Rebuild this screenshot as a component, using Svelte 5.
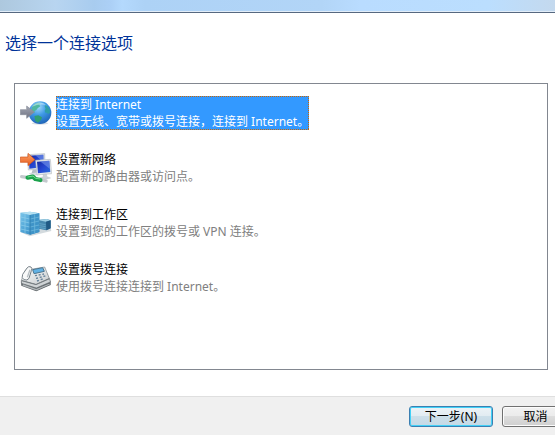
<script>
  let selected = $state('internet');

  const options = [
    { id: 'internet', title: '连接到 Internet', desc: '设置无线、宽带或拨号连接，连接到 Internet。' },
    { id: 'network', title: '设置新网络', desc: '配置新的路由器或访问点。' },
    { id: 'workplace', title: '连接到工作区', desc: '设置到您的工作区的拨号或 VPN 连接。' },
    { id: 'dialup', title: '设置拨号连接', desc: '使用拨号连接连接到 Internet。' }
  ];
</script>

<svelte:head><title>设置连接或网络</title></svelte:head>

<div class="wizard">
  <div class="glass"></div>

  <main class="content">
    <h1>选择一个连接选项</h1>

    <ul class="options">
      {#each options as opt (opt.id)}
        <li>
          <button type="button" class="option" class:selected={selected === opt.id}
                  aria-pressed={selected === opt.id} onclick={() => (selected = opt.id)}>
            <svg class="icon" viewBox="0 0 96 96" aria-hidden="true">
              {#if opt.id === 'internet'}
                <defs>
                  <radialGradient id="sea" cx="0.42" cy="0.25" r="0.8">
                    <stop offset="0" stop-color="#a4dafa" />
                    <stop offset="0.45" stop-color="#3f9ae6" />
                    <stop offset="1" stop-color="#1c5fb4" />
                  </radialGradient>
                  <linearGradient id="grey-arrow" x1="0" y1="0" x2="0" y2="1">
                    <stop offset="0" stop-color="#a5a8b4" />
                    <stop offset="1" stop-color="#6d7282" />
                  </linearGradient>
                </defs>
                <ellipse cx="60" cy="82" rx="25" ry="4" fill="#d5dce3" />
                <circle cx="60" cy="50" r="34" fill="url(#sea)" />
                <path d="M36 34 L43 25 L52 20 L62 21 L58 27 L61 31 L53 37 L49 42 L43 46 L45 52 L39 49 L34 44Z" fill="#4fb7a0" />
                <path d="M76 26 L82 30 L89 40 L90 50 L85 54 L80 50 L76 50 L74 44 L77 38 L74 32Z" fill="#2f9fa7" />
                <path d="M43 60 L55 58 L66 64 L63 72 L54 80 L46 75Z" fill="#2f9f74" />
                <path d="M36 32 Q58 9 81 29 Q63 20 36 32Z" fill="#def6ff" opacity="0.5" />
                <path d="M1 41 H20 V30 L43 48 L20 67 V56 H1Z" fill="url(#grey-arrow)" stroke="#8a8e9a" stroke-width="2" />
              {:else if opt.id === 'network'}
                <defs>
                  <linearGradient id="screen" x1="0" y1="0" x2="1" y2="1">
                    <stop offset="0" stop-color="#1428a0" />
                    <stop offset="0.5" stop-color="#2545d0" />
                    <stop offset="1" stop-color="#2a6cdc" />
                  </linearGradient>
                  <linearGradient id="orange-arrow" x1="0" y1="0" x2="0" y2="1">
                    <stop offset="0" stop-color="#ffa468" />
                    <stop offset="1" stop-color="#e65a1d" />
                  </linearGradient>
                </defs>
                <path d="M23 11 L74 8 L75 52 L25 57Z" fill="#dee2e5" stroke="#b5bcc4" stroke-width="2" />
                <path d="M27 14 L70 11 L71 48 L28 53Z" fill="url(#screen)" />
                <path d="M45 12 L70 11 L70 34Z" fill="#7897ea" opacity="0.6" />
                <path d="M38 56 L50 55 L52 66 L34 69Z" fill="#b3bcc6" />
                <path d="M28 68 L56 62 L68 68 L40 74Z" fill="#dae0e5" stroke="#b3bbc2" />
                <path d="M47 28 L91 25 L95 68 L51 72Z" fill="#e8ebed" stroke="#b9c0c6" stroke-width="2" />
                <path d="M51 32 L88 29 L91 63 L54 67Z" fill="url(#screen)" />
                <path d="M60 31 L88 29 L90 54Z" fill="#7897ea" opacity="0.6" />
                <path d="M69 70 L79 69 L81 77 L92 81 L71 87 L59 80 L70 77Z" fill="#cbd1d8" stroke="#a9b0b8" />
                <path d="M5 77 L20 79 M66 87 L78 90" stroke="#c3c9cd" stroke-width="10" stroke-linecap="round" />
                <path d="M23 80 L39 77 L46 84 L61 87" fill="none" stroke="#1ba24c" stroke-width="13" stroke-linecap="round" stroke-linejoin="round" />
                <path d="M23 78 L39 75 L47 82 L61 84" fill="none" stroke="#74dd8e" stroke-width="3" />
                <path d="M1 18 H24 V7 L45 26 L24 44 V34 H1Z" fill="url(#orange-arrow)" stroke="#cd511a" stroke-width="2" />
              {:else if opt.id === 'workplace'}
                <defs>
                  <linearGradient id="tower" x1="0" y1="0" x2="1" y2="1">
                    <stop offset="0" stop-color="#7cc6ea" />
                    <stop offset="0.5" stop-color="#4fa4d6" />
                    <stop offset="1" stop-color="#3282ba" />
                  </linearGradient>
                </defs>
                <path d="M2 79 L29 91 L94 75 L92 67Z" fill="#d3dade" />
                <path d="M53 42 L80 39 L92 43 V67 L79 73 L52 68Z" fill="#4588ae" />
                <path d="M53 42 L80 39 L92 43 L78 47Z" fill="#9dcfe4" />
                <path d="M78 47 L92 43 V67 L79 73Z" fill="#205a84" />
                <path d="M53 52 L77 56 M53 58 L77 62 M53 64 L77 68" stroke="#6fb0d1" stroke-width="2" />
                <path d="M1 20 L30 17 L58 22 V78 L30 86 L1 78Z" fill="url(#tower)" />
                <path d="M1 20 L30 17 L58 22 L30 27Z" fill="#b4e0f1" />
                <path d="M30 27 L58 22 V78 L30 86Z" fill="#3f94c8" />
                <path d="M2 33 L29 39 M2 45 L29 51 M2 57 L29 63 M2 69 L29 75 M15 24 V82" stroke="#8fcfeb" stroke-width="2" />
                <path d="M31 39 L57 33 M31 51 L57 45 M31 63 L57 57 M31 75 L57 69 M44 25 V82" stroke="#74bde0" stroke-width="2" />
                <path d="M30 27 V86" stroke="#2876a8" stroke-width="2" />
              {:else}
                <defs>
                  <linearGradient id="plastic" x1="0" y1="0" x2="1" y2="1">
                    <stop offset="0" stop-color="#fafbfb" />
                    <stop offset="1" stop-color="#c9cdcf" />
                  </linearGradient>
                </defs>
                <path d="M3 62 L18 40 L82 38 L92 62 V72 L49 91 L4 74Z" fill="#5a6063" />
                <path d="M4 58 L16 28 L74 18 L88 52 L48 70Z" fill="url(#plastic)" stroke="#7d8589" stroke-width="2" />
                <path d="M4 59 L48 71 L89 53 L91 63 L49 81 L4 67Z" fill="#cfd3d5" stroke="#6a7175" stroke-width="2" />
                <path d="M8 72 L49 86 L89 69" fill="none" stroke="#b0b5b8" stroke-width="4" />
                <path d="M38 26 L68 20 L73 31 L42 38Z" fill="#62b2e4" stroke="#4b7590" stroke-width="3" />
                <path d="M45 44 L51 43 M56 42 L62 41 M67 40 L72 39 M48 52 L54 51 M59 49 L65 48 M70 46 L76 45 M51 60 L57 58 M62 56 L68 54" stroke="#67839a" stroke-width="4" />
                <path d="M8 40 L21 21 Q26 14 33 18 Q38 22 34 29 L27 52 Q22 60 12 56 Q3 51 8 40Z" fill="#f8f9f9" stroke="#79838a" stroke-width="3" />
                <path d="M30 26 L22 49" fill="none" stroke="#b6bdc1" stroke-width="4" />
              {/if}
            </svg>
            <span class="label">
              <span class="title">{opt.title}</span>
              <span class="desc">{opt.desc}</span>
            </span>
          </button>
        </li>
      {/each}
    </ul>
  </main>

  <footer class="actions">
    <button type="button" class="btn btn-default">下一步(N)</button>
    <button type="button" class="btn">取消</button>
  </footer>
</div>

<style>
  :global(body) {
    overflow: hidden;
  }
  .wizard {
    display: flex;
    flex-direction: column;
    min-height: 100vh;
    overflow: hidden;
    background: #fff;
    font-family: 'Noto Sans', 'Noto Sans CJK SC', sans-serif;
    font-size: 12px;
    line-height: 17px;
    color: #000;
  }
  .glass {
    height: 11px;
    background: linear-gradient(90deg, #adc8de 0%, #b8d5f0 10%, #a8ccef 17%, #acd0f6 20%, #b4d9fd 22%, #add2f6 26%, #b2d5f7 58%, #b9dcff 65%, #bbdefe 88%, #c4d9ee 100%);
    border-bottom: 1px solid #e2edf8;
    box-shadow: 0 1px 0 #566880;
  }

  .content {
    flex: 1;
    display: flex;
    flex-direction: column;
    padding: 20px 7px 26px 14px;
  }
  h1 {
    margin: 0 0 29px -9px;
    font-size: 16px;
    line-height: 22px;
    font-weight: 400;
    color: #003399;
  }

  .options {
    flex: 1;
    margin: 0;
    padding: 12px 5px;
    border: 1px solid #828790;
    list-style: none;
  }
  .options li { margin-bottom: 21px; }
  .option {
    display: flex;
    align-items: flex-start;
    gap: 4px;
    padding: 0;
    border: 0;
    background: none;
    font: inherit;
    color: inherit;
    text-align: left;
    outline: none;
  }
  .icon { width: 32px; height: 32px; flex: none; }
  .label { display: block; }
  .title, .desc { display: block; }
  .desc { color: #808080; }
  /* focus rectangle: every other pixel along each edge */
  .selected .label {
    --dots-x: repeating-linear-gradient(90deg, #cc6600 0 1px, #3399ff 1px 2px);
    --dots-y: repeating-linear-gradient(#cc6600 0 1px, #3399ff 1px 2px);
    background:
      var(--dots-x) top / 100% 1px no-repeat,
      var(--dots-x) bottom / 100% 1px no-repeat,
      var(--dots-y) left / 1px 100% no-repeat,
      var(--dots-y) right / 1px 100% no-repeat,
      #3399ff;
    color: #fff;
  }
  .selected .desc { color: #fff; }

  .actions {
    display: flex;
    justify-content: flex-end;
    gap: 9px;
    margin-right: -14px;
    padding: 9px 0 8px;
    background: #f0f0f0;
    border-top: 1px solid #dfdfdf;
  }
  .btn {
    min-width: 67px;
    height: 21px;
    padding: 0 14px;
    border: 1px solid #707070;
    border-radius: 3px;
    background: linear-gradient(#f2f2f2 0%, #ebebeb 50%, #dddddd 50%, #cfcfcf 100%);
    box-shadow: inset 0 0 0 1px #fcfcfc;
    font: inherit;
    color: #000;
    white-space: nowrap;
  }
  .btn-default {
    min-width: 84px;
    border-color: #3c7fb1;
    background: linear-gradient(#edf3f7 0%, #e1ebf1 50%, #cddfe9 50%, #c4d9e6 100%);
    box-shadow: inset 0 0 0 1px #42d1f7;
  }
</style>
